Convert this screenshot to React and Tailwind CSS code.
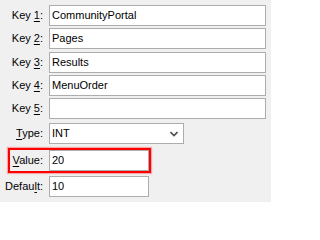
import React from "react";

const font = { fontFamily: '"Liberation Sans", Arial, sans-serif' };

function Label({ pre, u, post }) {
  return (
    <div className="w-[43px] shrink-0 text-right whitespace-nowrap text-[11px] leading-none text-black">
      {pre}
      <span className="underline underline-offset-[2px]">{u}</span>
      {post}
    </div>
  );
}

function Box({ w, children, extra }) {
  return (
    <div
      className={`${w} h-[21px] border border-[#adadad] bg-white flex items-center pl-[2px] text-[11px] text-black leading-none ${extra || ""}`}
    >
      {children}
    </div>
  );
}

function Row({ mt, label, children }) {
  return (
    <div className={`flex items-center gap-[6px] ${mt}`}>
      {label}
      {children}
    </div>
  );
}

export default function App() {
  return (
    <div className="relative w-[271px] h-[202px] bg-[#f0f0f0] overflow-hidden" style={font}>
      <div className="flex flex-col pt-[5px]">
        <Row mt="" label={<Label pre="Key " u="1" post=":" />}>
          <Box w="w-[217px]">CommunityPortal</Box>
        </Row>
        <Row mt="mt-[2px]" label={<Label pre="Key " u="2" post=":" />}>
          <Box w="w-[217px]">Pages</Box>
        </Row>
        <Row mt="mt-[3px]" label={<Label pre="Key " u="3" post=":" />}>
          <Box w="w-[217px]">Results</Box>
        </Row>
        <Row mt="mt-[2px]" label={<Label pre="Key " u="4" post=":" />}>
          <Box w="w-[217px]">MenuOrder</Box>
        </Row>
        <Row mt="mt-[2px]" label={<Label pre="Key " u="5" post=":" />}>
          <Box w="w-[217px]" />
        </Row>
        <Row mt="mt-[4px]" label={<Label pre="" u="T" post="ype:" />}>
          <Box w="w-[135px]" extra="justify-between pr-[5px]">
            <span>INT</span>
            <svg width="8" height="6" viewBox="0 0 8 6" className="mt-[1px]">
              <path d="M0.5 1 L4 4.5 L7.5 1" fill="none" stroke="#505050" strokeWidth="1.6" />
            </svg>
          </Box>
        </Row>
        <Row mt="mt-[6px]" label={<Label pre="" u="V" post="alue:" />}>
          <Box w="w-[100px]">20</Box>
        </Row>
        <Row mt="mt-[5px]" label={<Label pre="Defau" u="l" post="t:" />}>
          <Box w="w-[100px]">10</Box>
        </Row>
      </div>
      <div className="absolute left-[8px] top-[148px] w-[143px] h-[25px] border-2 border-[#ff0000] shadow-[0_0_1px_1px_rgba(255,80,80,0.45)]" />
    </div>
  );
}
